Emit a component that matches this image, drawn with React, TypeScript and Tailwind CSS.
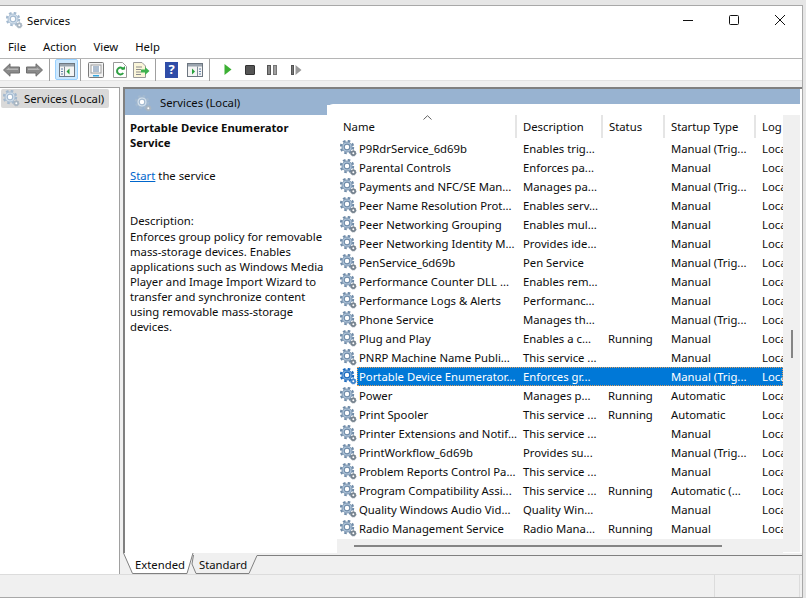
import { ReactNode } from "react";

const rows = [
  ["P9RdrService_6d69b", "Enables trig...", "", "Manual (Trig..."],
  ["Parental Controls", "Enforces pa...", "", "Manual"],
  ["Payments and NFC/SE Man...", "Manages pa...", "", "Manual (Trig..."],
  ["Peer Name Resolution Prot...", "Enables serv...", "", "Manual"],
  ["Peer Networking Grouping", "Enables mul...", "", "Manual"],
  ["Peer Networking Identity M...", "Provides ide...", "", "Manual"],
  ["PenService_6d69b", "Pen Service", "", "Manual (Trig..."],
  ["Performance Counter DLL ...", "Enables rem...", "", "Manual"],
  ["Performance Logs & Alerts", "Performanc...", "", "Manual"],
  ["Phone Service", "Manages th...", "", "Manual (Trig..."],
  ["Plug and Play", "Enables a c...", "Running", "Manual"],
  ["PNRP Machine Name Publi...", "This service ...", "", "Manual"],
  ["Portable Device Enumerator...", "Enforces gr...", "", "Manual (Trig..."],
  ["Power", "Manages p...", "Running", "Automatic"],
  ["Print Spooler", "This service ...", "Running", "Automatic"],
  ["Printer Extensions and Notif...", "This service ...", "", "Manual"],
  ["PrintWorkflow_6d69b", "Provides su...", "", "Manual (Trig..."],
  ["Problem Reports Control Pa...", "This service ...", "", "Manual"],
  ["Program Compatibility Assi...", "This service ...", "Running", "Automatic (..."],
  ["Quality Windows Audio Vid...", "Quality Win...", "", "Manual"],
  ["Radio Management Service", "Radio Mana...", "Running", "Manual"],
];

const Gear = ({ selected = false, faded = false }: { selected?: boolean; faded?: boolean }) => {
  const main = selected ? "#1b69bd" : faded ? "#a3b9cf" : "#6f8ba8";
  const inner = selected ? "#7fb0e0" : faded ? "#d8e4ef" : "#b5cade";
  const small = selected ? "#3d83cc" : faded ? "#a9b6c2" : "#76838f";
  return (
    <svg width="17" height="17" viewBox="0 0 17 17" className="shrink-0">
      <circle cx="7" cy="7" r="6.2" fill="none" stroke={main} strokeWidth="2" strokeDasharray="2.6 2.27" />
      <circle cx="7" cy="7" r="5" fill={inner} stroke={main} strokeWidth="0.9" />
      <circle cx="7" cy="7" r="2.8" fill="#ffffff" stroke={main} strokeWidth="1.2" />
      <circle cx="13.3" cy="13.3" r="2.7" fill={small} stroke={small} strokeWidth="0.9" strokeDasharray="1.2 0.8" />
      <circle cx="13.3" cy="13.3" r="1" fill="#ffffff" />
    </svg>
  );
};

const Sep = () => <div className="h-[22px] w-px bg-[#a0a0a0]" />;

const Arrow = ({ flip = false }: { flip?: boolean }) => (
  <svg width="17" height="14" viewBox="0 0 17 14" className={flip ? "-scale-x-100" : ""}>
    <path d="M0.5 7 L7 0.8 V4 H16.5 V10 H7 V13.2 Z" fill="#8a8a8a" stroke="#6e6e6e" />
    <path d="M3 7 L6 4.5 V5.5 H15 V7 Z" fill="#b5b5b5" />
  </svg>
);

const ConsoleIcon = ({ green, side }: { green: "left" | "right"; side?: boolean }) => (
  <svg width="16" height="16" viewBox="0 0 16 16">
    <rect x="0.5" y="1.5" width="15" height="13" fill="#f4f4f4" stroke="#6d7680" />
    <rect x="1" y="2" width="14" height="2.5" fill="#9aa4ae" />
    <line x1={side ? 5.5 : 10.5} y1="4.5" x2={side ? 5.5 : 10.5} y2="14" stroke="#7f8a96" />
    <path d={green === "left" ? "M10.5 6.5 V12.5 L7.5 9.5 Z" : "M5 6.5 V12.5 L8 9.5 Z"} fill="#27a13a" />
    {side ? (
      <path d="M2 7h2M2 9.5h2M2 12h2" stroke="#5f7fa8" />
    ) : (
      <path d="M12 7h2M12 9.5h2M12 12h2" stroke="#5f7fa8" />
    )}
  </svg>
);

const Toolbar = () => (
  <div className="flex h-[22px] shrink-0 items-center border-b border-[#e3e3e3] pl-[3px]">
    <Arrow />
    <div className="w-[6px]" />
    <Arrow flip />
    <div className="w-[6px]" />
    <Sep />
    <div className="ml-[5px] flex h-[21px] w-[23px] items-center justify-center rounded-[2px] border border-[#99d1ff] bg-[#cce8ff]">
      <ConsoleIcon green="left" side />
    </div>
    <div className="ml-[2px]" />
    <Sep />
    <div className="ml-[7px]">
      <svg width="16" height="16" viewBox="0 0 16 16">
        <rect x="0.5" y="0.5" width="15" height="15" rx="1" fill="#f2f2f2" stroke="#7b7b7b" />
        <rect x="3" y="3" width="10" height="8" fill="#ffffff" stroke="#9a9a9a" />
        <path d="M5 5h6M5 7h6M5 9h6" stroke="#5d7da0" />
        <rect x="5" y="13" width="6" height="1.5" fill="#35a7e0" />
      </svg>
    </div>
    <div className="ml-[9px]">
      <svg width="14" height="16" viewBox="0 0 14 16">
        <path d="M0.5 0.5 H9.5 L13.5 4.5 V15.5 H0.5 Z" fill="#ffffff" stroke="#9a9a9a" />
        <path d="M10.5 7.5 A3.4 3.4 0 1 0 10.2 11" fill="none" stroke="#2ea043" strokeWidth="2" />
        <path d="M8 7.5 H12 V4 Z" fill="#2ea043" />
      </svg>
    </div>
    <div className="ml-[6px]">
      <svg width="17" height="16" viewBox="0 0 17 16">
        <path d="M0.5 0.5 H9 L12.5 4 V15.5 H0.5 Z" fill="#fbf6d9" stroke="#9a9a9a" />
        <path d="M3 5h6M3 7.5h5M3 10h5M3 12.5h5" stroke="#8c8c8c" />
        <path d="M8 7.5 H12 V5 L16.5 9 L12 13 V10.5 H8 Z" fill="#3fb24f" />
      </svg>
    </div>
    <div className="ml-[5px]" />
    <Sep />
    <div className="ml-[9px] flex h-[16px] w-[13px] items-center justify-center bg-[#2f4da8] font-bold text-[13px] leading-none text-white">?</div>
    <div className="ml-[9px]">
      <ConsoleIcon green="right" />
    </div>
    <div className="ml-[6px]" />
    <Sep />
    <div className="ml-[14px]">
      <svg width="8" height="11" viewBox="0 0 8 11">
        <path d="M0.5 0 L7.5 5.5 L0.5 11 Z" fill="#3cb034" />
      </svg>
    </div>
    <div className="ml-[13px] h-[10px] w-[10px] rounded-[1px] border border-[#333333] bg-[#555555]" />
    <div className="ml-[12px] flex gap-[2px]">
      <div className="h-[10px] w-[4px] border border-[#555555] bg-[#888888]" />
      <div className="h-[10px] w-[4px] border border-[#777777] bg-[#a0a0a0]" />
    </div>
    <div className="ml-[14px] flex items-center gap-[1px]">
      <div className="h-[10px] w-[3px] border border-[#555555] bg-[#777777]" />
      <svg width="7" height="10" viewBox="0 0 7 10">
        <path d="M0.5 0 L6.5 5 L0.5 10 Z" fill="#9a9a9a" />
      </svg>
    </div>
  </div>
);

const Head = ({ className, children }: { className: string; children: ReactNode }) => (
  <div className={`flex h-[23px] shrink-0 items-center overflow-hidden border-r-2 border-[#e5e5e5] pl-[6px] ${className}`}>{children}</div>
);

const ServiceRow = ({ row }: { row: string[] }) => {
  const selected = row[0].startsWith("Portable");
  return (
    <div className="flex h-[19px] items-center whitespace-nowrap">
      <div className="ml-[3px] w-[17px] shrink-0">
        <Gear selected={selected} />
      </div>
      <div
        className={
          selected
            ? "flex h-[19px] w-[426px] shrink-0 items-center bg-[#0078d7] text-white outline outline-1 -outline-offset-1 outline-dotted outline-[#e0a060]"
            : "flex h-[19px] w-[426px] shrink-0 items-center"
        }>
        <div className="w-[166px] shrink-0 pl-[2px]">{row[0]}</div>
        <div className="w-[85px] shrink-0">{row[1]}</div>
        <div className="w-[63px] shrink-0">{row[2]}</div>
        <div className="w-[91px] shrink-0">{row[3]}</div>
        <div className="w-[21px] shrink-0 overflow-hidden">Local Service</div>
      </div>
    </div>
  );
};

export default function App() {
  return (
    <div className="h-[598px] w-[806px] overflow-hidden bg-[#e6e6e6] pt-[5px] text-[11.3px] leading-[15px] text-[#0c0c0c] [font-family:'Noto_Sans',sans-serif]">
      <div className="flex h-[593px] w-[803px] flex-col border-t border-r border-b border-[#a8a8a8] bg-white">
        {/* title bar */}
        <div className="flex h-[32px] shrink-0 items-start pl-[6px] pt-[6px]">
          <Gear faded />
          <span className="ml-[4px] mt-[1px]">Services</span>
          <div className="ml-auto mt-[2px] flex items-center">
            <svg width="12" height="12" viewBox="0 0 12 12" className="mr-[34px]">
              <path d="M1 6.5 H11" stroke="#111111" />
            </svg>
            <svg width="12" height="12" viewBox="0 0 12 12" className="mr-[34px]">
              <rect x="1.5" y="1.5" width="9" height="9" rx="1" fill="none" stroke="#111111" />
            </svg>
            <svg width="12" height="12" viewBox="0 0 12 12" className="mr-[16px]">
              <path d="M1 1 L11 11 M11 1 L1 11" stroke="#111111" />
            </svg>
          </div>
        </div>
        {/* menu */}
        <div className="flex h-[21px] shrink-0 items-center gap-[17px] border-b border-[#b5b5b5] pl-[8px] pb-[4px]">
          <span>File</span>
          <span>Action</span>
          <span>View</span>
          <span>Help</span>
        </div>
        <Toolbar />
        {/* panes */}
        <div className="flex min-h-0 flex-1 bg-[#f0f0f0] pt-[6px]">
          <div className="w-[120px] shrink-0 border-t border-r border-[#a0a0a0] bg-white p-[1px]">
            <div className="flex h-[19px] w-[108px] items-center gap-[4px] rounded-[2px] bg-[#d9d9d9] pl-[2px]">
              <Gear faded />
              <span>Services (Local)</span>
            </div>
          </div>
          <div className="ml-[3px] flex min-w-0 flex-1 flex-col">
            <div className="flex min-h-0 flex-1 flex-col border-t-2 border-l-2 border-[#808080] bg-white">
              <div className="relative z-10 mr-[2px] flex h-[16px] shrink-0 items-start gap-[8px] bg-[#98b3d1] pl-[10px] pt-[6px]">
                <Gear faded />
                <span>Services (Local)</span>
              </div>
              <div className="flex min-h-0 flex-1">
                <div className="flex w-[202px] shrink-0 flex-col">
                  <div className="h-[10px] bg-[#98b3d1]" />
                  <div className="pl-[5px] pr-[2px] pt-[5px]">
                    <div className="pr-[20px] font-bold">Portable Device Enumerator Service</div>
                    <div className="mt-[18px]">
                      <span className="text-[#0066cc] underline">Start</span> the service
                    </div>
                    <div className="mt-[30px]">Description:</div>
                    <div className="mt-[1px]">
                      Enforces group policy for removable mass-storage devices. Enables applications such as Windows
                      Media Player and Image Import Wizard to transfer and synchronize content using removable
                      mass-storage devices.
                    </div>
                  </div>
                </div>
                <div className="relative z-20 -mt-[1px] flex min-w-0 flex-1 overflow-hidden rounded-tl-[6px] bg-white">
                  <div className="flex w-[456px] flex-col">
                    <div className="relative mt-[11px] flex h-[23px] w-[446px] shrink-0 pl-[10px]">
                      <svg width="9" height="5" viewBox="0 0 9 5" className="absolute left-[96px] top-0">
                        <path d="M0.5 4.5 L4.5 0.7 L8.5 4.5" fill="none" stroke="#606060" />
                      </svg>
                      <Head className="w-[180px]">Name</Head>
                      <Head className="w-[86px]">Description</Head>
                      <Head className="w-[62px]">Status</Head>
                      <Head className="w-[91px]">Startup Type</Head>
                      <div className="flex h-[23px] items-center pl-[6px]">Log</div>
                    </div>
                    <div className="pt-[1px] pl-[10px]">
                      {rows.map((row) => (
                        <ServiceRow key={row[0]} row={row} />
                      ))}
                    </div>
                    <div className="ml-[10px] mt-[1px] flex h-[17px] w-[446px] items-center bg-[#f0f0f0] pl-[17px]">
                      <div className="h-[2px] w-[368px] bg-[#858585]" />
                    </div>
                  </div>
                  <div className="mt-[11px] mb-[1px] flex w-[17px] justify-center bg-[#f0f0f0]">
                    <div className="mt-[215px] h-[28px] w-[2px] bg-[#858585]" />
                  </div>
                </div>
              </div>
            </div>
            {/* tabs */}
            <div className="relative flex h-[21px] shrink-0 items-center bg-[#f0f0f0] pl-[12px] pt-[2px]">
              <svg width="679" height="21" viewBox="0 0 679 21" className="absolute left-0 top-0">
                <path d="M0.5 0 L9.5 20.5 H64 L70 0 Z" fill="#ffffff" />
                <path d="M0.5 0 L9.5 20.5 H64 L70 0" fill="none" stroke="#808080" />
                <path d="M70.5 2 L69 11 L73 20.5 H126 L134 2.5 H679" fill="none" stroke="#808080" />
              </svg>
              <span className="relative">Extended</span>
              <span className="relative ml-[14px]">Standard</span>
            </div>
          </div>
        </div>
        {/* status bar */}
        <div className="flex h-[23px] shrink-0 justify-end border-t border-[#dcdcdc] bg-[#f0f0f0]">
          <div className="mr-[84px] w-px bg-[#dcdcdc]" />
          <div className="mr-[2px] w-px bg-[#dcdcdc]" />
        </div>
      </div>
    </div>
  );
}
